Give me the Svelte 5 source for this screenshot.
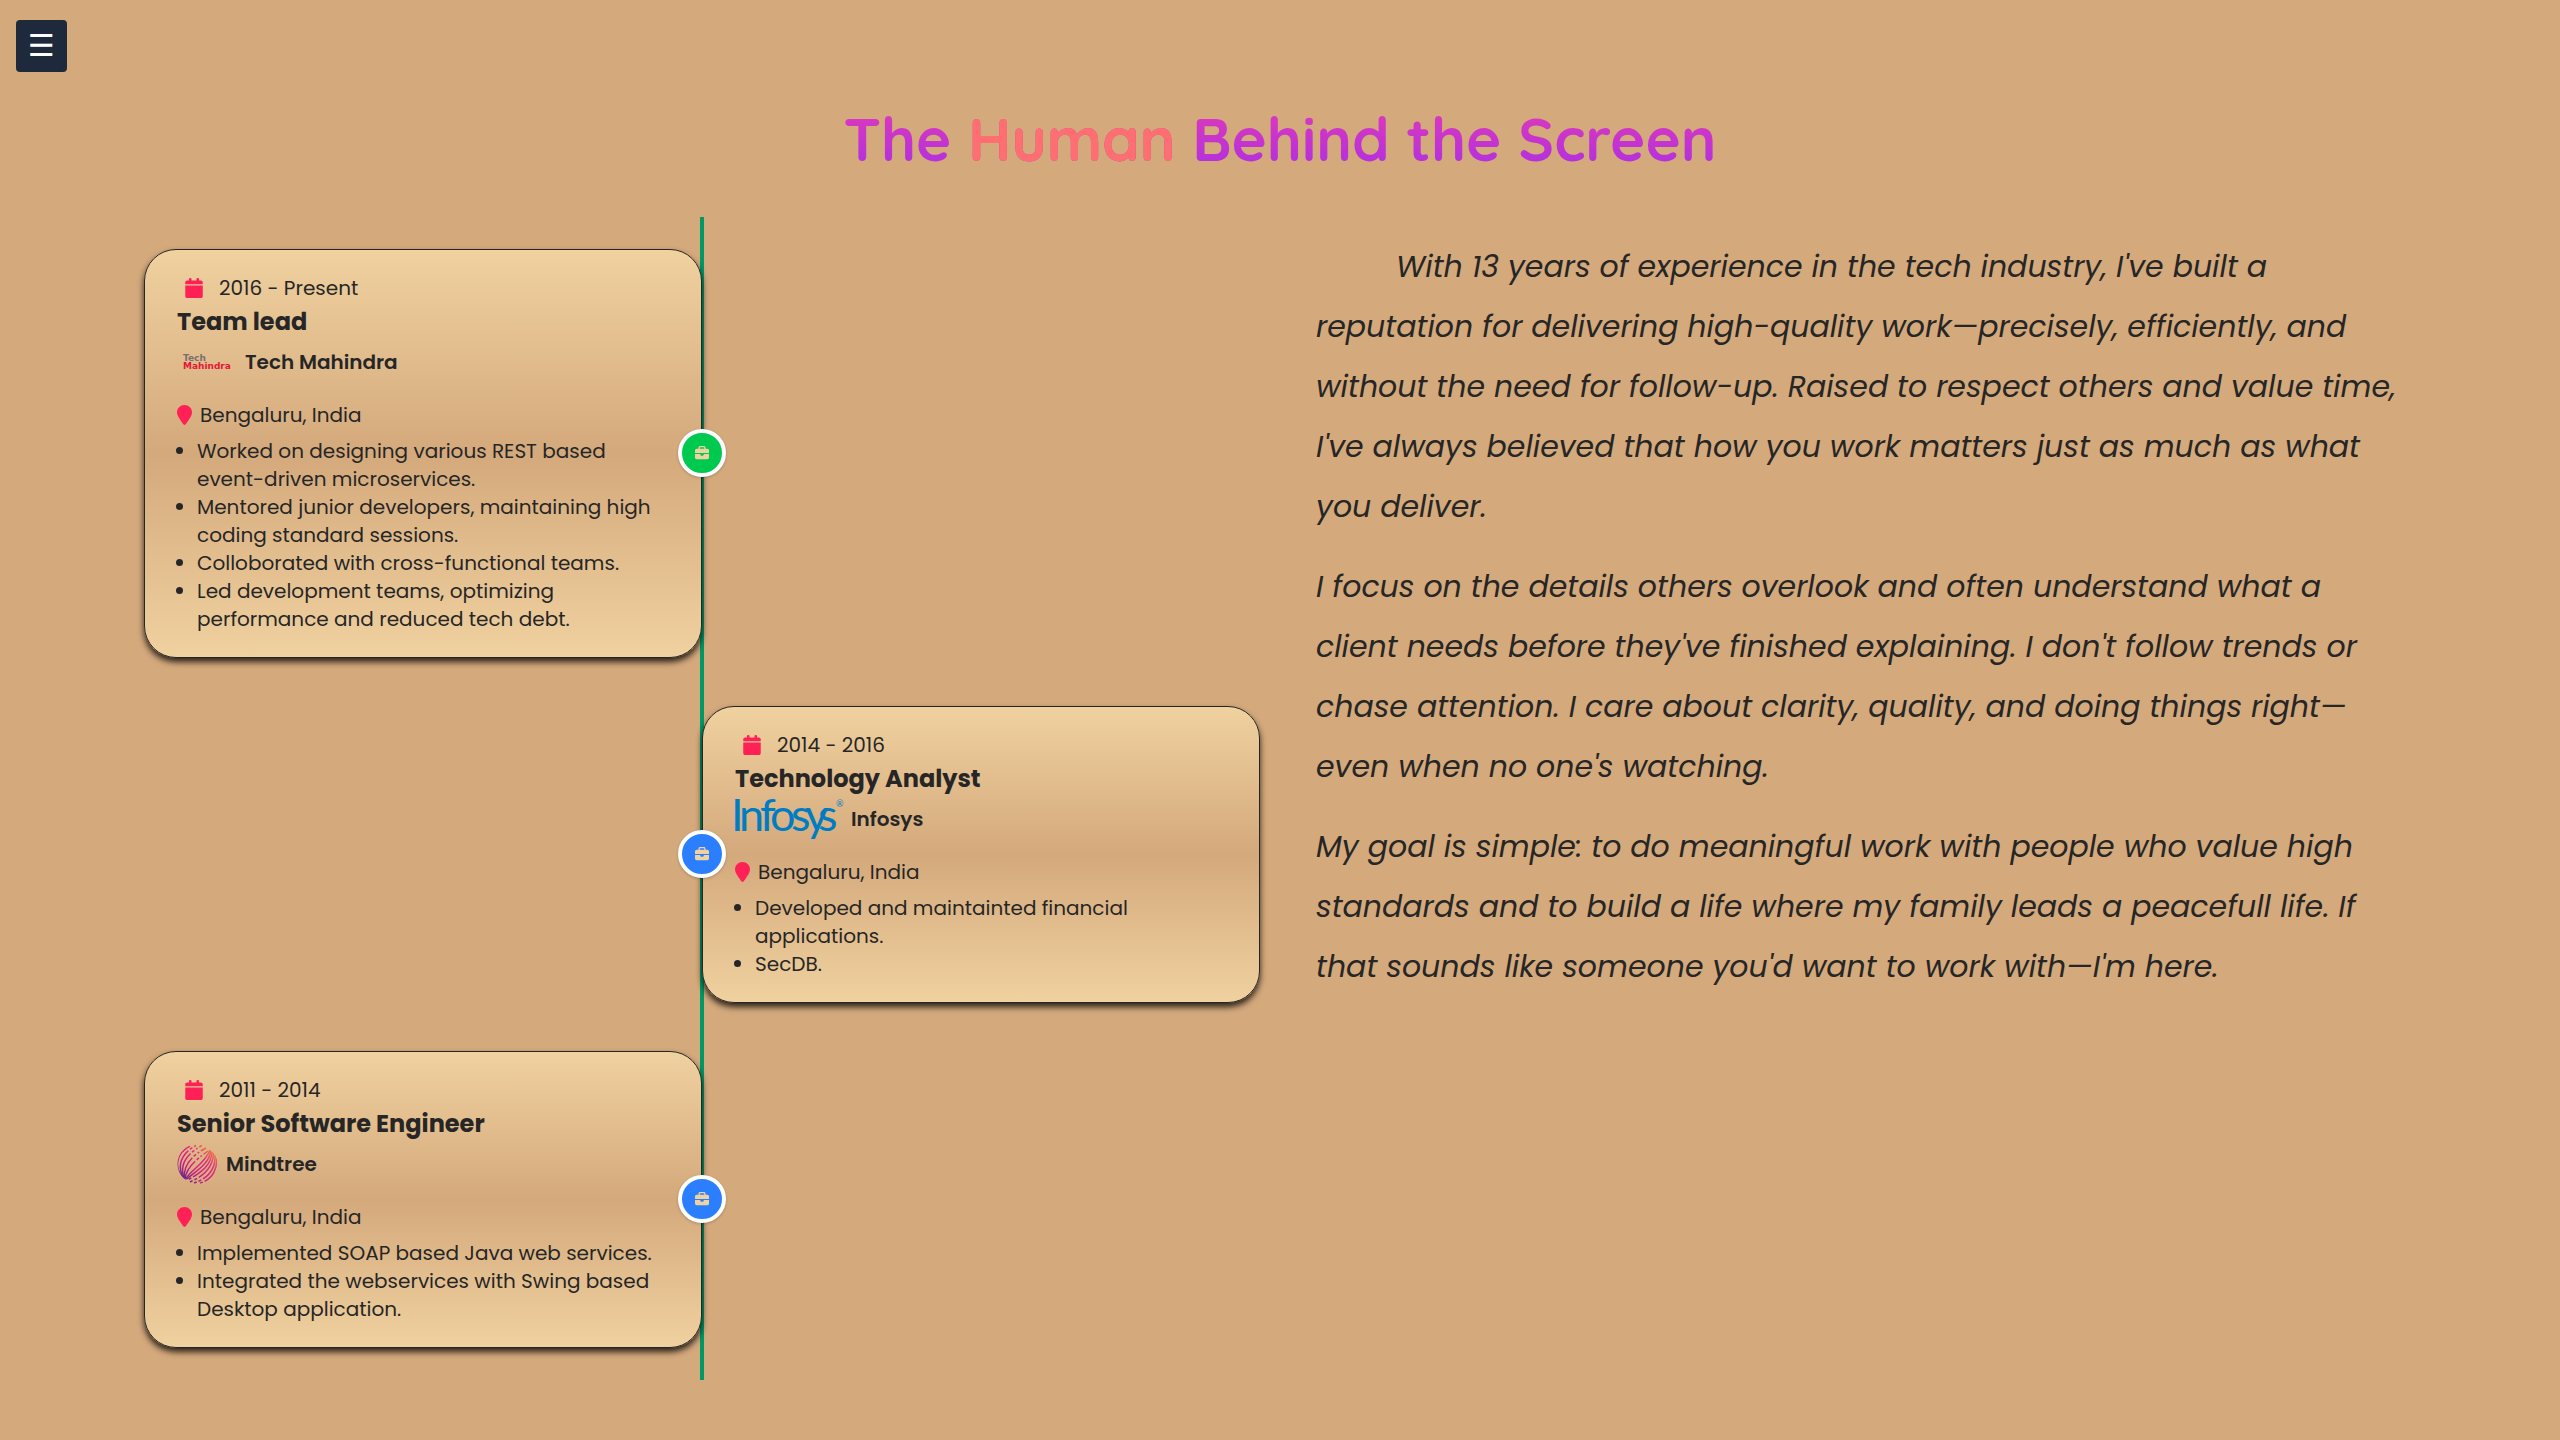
<script>
  const jobs = [
    {
      period: '2016 - Present',
      title: 'Team lead',
      company: 'Tech Mahindra',
      place: 'Bengaluru, India',
      side: 'left',
      current: true,
      tasks: [
        'Worked on designing various REST based event-driven microservices.',
        'Mentored junior developers, maintaining high coding standard sessions.',
        'Colloborated with cross-functional teams.',
        'Led development teams, optimizing performance and reduced tech debt.'
      ]
    },
    {
      period: '2014 - 2016',
      title: 'Technology Analyst',
      company: 'Infosys',
      place: 'Bengaluru, India',
      side: 'right',
      current: false,
      tasks: ['Developed and maintainted financial applications.', 'SecDB.']
    },
    {
      period: '2011 - 2014',
      title: 'Senior Software Engineer',
      company: 'Mindtree',
      place: 'Bengaluru, India',
      side: 'left',
      current: false,
      tasks: [
        'Implemented SOAP based Java web services.',
        'Integrated the webservices with Swing based Desktop application.'
      ]
    }
  ];

  const story = [
    "With 13 years of experience in the tech industry, I've built a reputation for delivering high-quality work—precisely, efficiently, and without the need for follow-up. Raised to respect others and value time, I've always believed that how you work matters just as much as what you deliver.",
    "I focus on the details others overlook and often understand what a client needs before they've finished explaining. I don't follow trends or chase attention. I care about clarity, quality, and doing things right—even when no one's watching.",
    "My goal is simple: to do meaningful work with people who value high standards and to build a life where my family leads a peacefull life. If that sounds like someone you'd want to work with—I'm here."
  ];

  // Stripes of the sphere: arcs hugging the left rim, slanted strokes across
  // the middle, arcs hugging the right rim.
  const ribbons = [
    { d: 'M6 33 C-3 24, -1 9, 13 2', dash: 'none' },
    { d: 'M6.5 33.5 C0 23, 3 10, 19 1.5', dash: '30 2 3 2' },
    { d: 'M7 34 C3 23, 7 11, 25 1.5', dash: '27 2 3 2 2 2' },
    { d: 'M7.5 34.5 C6 24, 12 13, 29 4', dash: '23 2 3 2 2 2' },
    { d: 'M8 35 C9 25, 17 17, 31 7', dash: '21 2 3 2 2 2' },
    { d: 'M8.5 35.5 C13 26, 28 20, 33 6', dash: 'none' },
    { d: 'M10 35 C17 28, 31 22, 34 7', dash: 'none' },
    { d: 'M12 35.5 C20 30, 34 24, 35 8', dash: '3 2 40 1' },
    { d: 'M13 38 C23 33, 36 27, 36.5 9', dash: '3 2 3 2 40 1' },
    { d: 'M17 39 C27 36, 39 28, 38 11', dash: '3 2 3 2 40 1' },
    { d: 'M23 39 C32 37, 41 28, 39.5 14', dash: '3 2 40 1' }
  ];
</script>

<button class="menu" type="button" aria-label="Open menu">☰</button>

<main>
  <h1>The <span>Human</span> Behind the Screen</h1>

  <div class="columns">
    <ol class="timeline">
      {#each jobs as job}
        <li class="entry {job.side}">
          <article class="card">
            <p class="period">
              <svg class="calendar" viewBox="0 0 448 512" aria-hidden="true"><path d="M96 32l0 32L48 64C21.5 64 0 85.5 0 112l0 48 448 0 0-48c0-26.5-21.5-48-48-48l-48 0 0-32c0-17.7-14.3-32-32-32s-32 14.3-32 32l0 32L160 64l0-32c0-17.7-14.3-32-32-32S96 14.3 96 32zM448 192L0 192 0 464c0 26.5 21.5 48 48 48l352 0c26.5 0 48-21.5 48-48l0-272z" /></svg>
              {job.period}
            </p>
            <h2>{job.title}</h2>
            <div class="company">
              {#if job.company === 'Tech Mahindra'}
                <svg class="logo" width="60" height="40" viewBox="0 0 60 40" aria-hidden="true">
                  <text class="tm" x="6" y="19" fill="#77706c">Tech</text>
                  <text class="tm" x="6" y="27" fill="#e31837">Mahindra</text>
                </svg>
              {:else if job.company === 'Infosys'}
                <svg class="logo" width="108" height="40" viewBox="0 0 108 40" aria-hidden="true">
                  <text class="inf" y="32" x="-4 4 25 35 56 70 83">Infosys</text>
                  <text class="reg" x="101" y="8">®</text>
                </svg>
              {:else}
                <svg class="logo" width="41" height="40" viewBox="0 0 41 40" aria-hidden="true">
                  <defs>
                    <linearGradient id="sphere" gradientUnits="userSpaceOnUse" x1="5" y1="36" x2="34" y2="4">
                      <stop offset="0" stop-color="#5b2a86" />
                      <stop offset="0.35" stop-color="#d61a85" />
                      <stop offset="0.7" stop-color="#e02f7c" />
                      <stop offset="1" stop-color="#f08040" />
                    </linearGradient>
                    <clipPath id="disc"><circle cx="20.5" cy="20" r="20" /></clipPath>
                  </defs>
                  <g clip-path="url(#disc)" fill="none" stroke="url(#sphere)" stroke-width="1.5">
                    {#each ribbons as r}
                      <path d={r.d} stroke-dasharray={r.dash} />
                    {/each}
                  </g>
                </svg>
              {/if}
              <strong>{job.company}</strong>
            </div>
            <p class="place">
              <svg class="pin" viewBox="0 0 384 512" aria-hidden="true"><path d="M384 192c0 87.4-117 243-168.3 307.2c-12.3 15.3-35.1 15.3-47.4 0C117 435 0 279.4 0 192C0 86 86 0 192 0S384 86 384 192z" /></svg>
              {job.place}
            </p>
            <ul>
              {#each job.tasks as task}
                <li>{task}</li>
              {/each}
            </ul>
          </article>
          <span class="badge" class:current={job.current}>
            <svg viewBox="0 0 512 512" aria-hidden="true"><path d="M184 48l144 0c4.4 0 8 3.6 8 8l0 40L176 96l0-40c0-4.4 3.6-8 8-8zm-56 8l0 40L64 96C28.7 96 0 124.7 0 160l0 96 192 0 128 0 192 0 0-96c0-35.3-28.7-64-64-64l-64 0 0-40c0-30.9-25.1-56-56-56L184 0c-30.9 0-56 25.1-56 56zM512 288l-192 0 0 32c0 17.7-14.3 32-32 32l-64 0c-17.7 0-32-14.3-32-32l0-32L0 288 0 416c0 35.3 28.7 64 64 64l384 0c35.3 0 64-28.7 64-64l0-128z" /></svg>
          </span>
        </li>
      {/each}
    </ol>

    <section class="story">
      {#each story as paragraph}
        <p>{paragraph}</p>
      {/each}
    </section>
  </div>
</main>

<style>
  :global(body) {
    margin: 0;
    background: #d4a97c;
    color: #262626;
    font-family: Poppins, Inter, sans-serif;
    font-size: 20px;
    line-height: 28px;
  }
  :global(#app) {
    position: relative;
    min-height: 100vh;
  }
  h1, h2, p, ol, ul {
    margin: 0;
    padding: 0;
  }
  .menu {
    position: absolute;
    top: 20px;
    left: 16px;
    padding: 8px 12px;
    border: 0;
    border-radius: 4px;
    background: #1e293b;
    color: #fff;
    font-family: "DejaVu Sans", sans-serif;
    font-size: 30px;
    line-height: 36px;
  }
  main {
    padding: 101px 144px 60px;
  }
  h1 {
    margin-bottom: 41px;
    background: linear-gradient(#e33bb4, #ab2ee6);
    background-clip: text;
    color: transparent;
    font-family: Quicksand, Inter, sans-serif;
    font-size: 60px;
    font-weight: 700;
    line-height: 75px;
    text-align: center;
  }
  h1 span {
    color: #ff6f71;
  }
  .columns {
    display: grid;
    grid-template-columns: 1fr 1fr;
    gap: 40px;
    align-items: start;
  }
  .timeline {
    position: relative;
    display: flex;
    flex-direction: column;
    gap: 48px;
    padding: 32px 0;
    list-style: none;
  }
  .timeline::before {
    content: '';
    position: absolute;
    top: 0;
    bottom: 0;
    left: 50%;
    width: 4px;
    margin-left: -2px;
    background: #009966;
  }
  .entry {
    position: relative;
    display: grid;
    grid-template-columns: 1fr 1fr;
  }
  .right .card {
    grid-column: 2;
  }
  .card {
    padding: 24px 32px;
    border: 1px solid #262626;
    border-radius: 32px;
    background: linear-gradient(#f0d1a0, #d4a97c 50%, #f0d1a0);
    box-shadow: 0 4px 6px rgba(0, 0, 0, 0.8);
  }
  .period,
  .place,
  .company {
    display: flex;
    align-items: center;
  }
  .period {
    gap: 16px;
    padding-left: 8px;
  }
  .calendar,
  .pin {
    height: 20px;
    fill: #ff2056;
  }
  .calendar {
    width: 18px;
  }
  .pin {
    width: 15px;
  }
  h2 {
    font-size: 24px;
    font-weight: 700;
    line-height: 40px;
  }
  .company {
    gap: 8px;
    margin-bottom: 19px;
  }
  .company strong {
    font-weight: 600;
  }
  .place {
    gap: 8px;
    margin-bottom: 8px;
  }
  .logo {
    overflow: visible;
  }
  .tm {
    font: 700 9px "DejaVu Sans", sans-serif;
  }
  .inf {
    fill: #007cc3;
    font: 400 45px Lato, sans-serif;
  }
  .reg {
    fill: #007cc3;
    font: 400 9px Lato, sans-serif;
  }
  ul {
    padding-left: 20px;
    list-style: disc;
  }
  .badge {
    position: absolute;
    top: 50%;
    left: 50%;
    display: flex;
    align-items: center;
    justify-content: center;
    box-sizing: border-box;
    width: 48px;
    height: 48px;
    margin: -25px 0 0 -24px;
    border: 4px solid #fff;
    border-radius: 50%;
    background: #2b7fff;
    box-shadow: 0 1px 3px rgba(0, 0, 0, 0.2);
  }
  .badge.current {
    background: #00c950;
  }
  .badge svg {
    width: 14px;
    height: 14px;
    fill: #f0d1a0;
  }
  .story {
    display: flex;
    flex-direction: column;
    gap: 20px;
    padding: 20px 16px;
    font-size: 30px;
    font-style: italic;
    line-height: 60px;
  }
  .story p:first-child {
    text-indent: 80px;
  }
</style>
